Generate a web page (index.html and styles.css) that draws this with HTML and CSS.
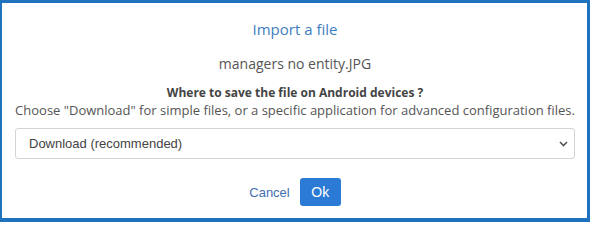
FILE: index.html
```html
<!DOCTYPE html>
<html>
<head>
<meta charset="utf-8">
<link rel="stylesheet" href="styles.css">
</head>
<body>
<div class="dialog">
  <h1 class="title">Import a file</h1>
  <p class="filename">managers no entity.JPG</p>
  <p class="question">Where to save the file on Android devices ?</p>
  <p class="hint">Choose "Download" for simple files, or a specific application for advanced configuration files.</p>
  <div class="select">
    <span class="select-text">Download (recommended)</span>
    <svg class="chevron" width="9" height="6" viewBox="0 0 9 6"><path d="M1 1 L4.5 4.5 L8 1" fill="none" stroke="#555" stroke-width="1.6"/></svg>
  </div>
  <div class="actions">
    <a class="cancel">Cancel</a>
    <button class="ok">Ok</button>
  </div>
</div>
</body>
</html>
```
FILE: styles.css
```css
html, body { margin: 0; padding: 0; background: #fff; }
.dialog {
  width: 590px;
  height: 222px;
  box-sizing: border-box;
  border-style: solid;
  border-color: #1f72bd;
  border-width: 3px 3px 4px 2px;
  padding: 0 12px 0 13px;
  font-family: "Open Sans", sans-serif;
  text-align: center;
  color: #555;
}
.title {
  margin: 0;
  padding-top: 16px;
  font-size: 15px;
  font-weight: 400;
  line-height: 20px;
  color: #3d7dbf;
}
.filename {
  margin: 15px 0 0;
  font-size: 14px;
  line-height: 20px;
  color: #555;
}
.question {
  margin: 11px 0 0;
  font-size: 12px;
  font-weight: 700;
  line-height: 16px;
  color: #444;
}
.hint {
  margin: 0;
  font-size: 13px;
  line-height: 18px;
  color: #555;
  white-space: nowrap;
}
.select {
  margin-top: 9px;
  height: 31px;
  box-sizing: border-box;
  border: 1px solid #d4d4d4;
  border-radius: 3px;
  display: flex;
  align-items: center;
  justify-content: space-between;
  padding: 0 6px 0 13px;
  font-family: "Liberation Sans", Arial, sans-serif;
  font-size: 13px;
  color: #444;
}
.actions {
  margin-top: 19px;
  display: flex;
  justify-content: center;
  align-items: center;
  gap: 10px;
}
.cancel {
  font-family: "Liberation Sans", Arial, sans-serif;
  font-size: 13px;
  color: #3f6fae;
}
.ok {
  width: 41px;
  height: 28px;
  border: none;
  border-radius: 3px;
  background: #2a7ad6;
  color: #fff;
  font-family: "Liberation Sans", Arial, sans-serif;
  font-size: 14px;
  padding: 0;
}
```
